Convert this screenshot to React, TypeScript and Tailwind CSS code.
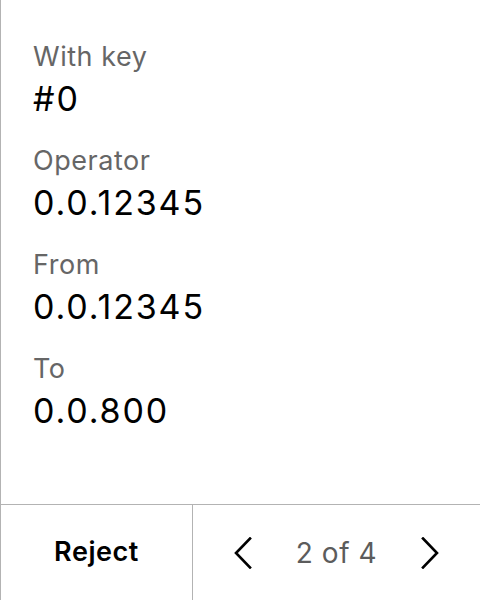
const rows = [
  { label: "With key", value: "#0" },
  { label: "Operator", value: "0.0.12345" },
  { label: "From", value: "0.0.12345" },
  { label: "To", value: "0.0.800" },
];

function Chevron({ dir }: { dir: "left" | "right" }) {
  return (
    <svg width="18" height="32" viewBox="0 0 18 32" fill="none" aria-hidden="true">
      <polyline
        points={dir === "left" ? "16,1.5 2,16 16,30.5" : "2,1.5 16,16 2,30.5"}
        stroke="black"
        strokeWidth="2.6"
        strokeLinecap="square"
        strokeLinejoin="miter"
      />
    </svg>
  );
}

export default function App() {
  return (
    <div className="flex h-[600px] w-[480px] flex-col border-l border-[#b3b3b3] bg-white font-['Inter',sans-serif]">
      <div className="flex flex-1 flex-col px-8 pt-[38px]">
        {rows.map((row) => (
          <div key={row.label} className="mb-[20px]">
            <div className="text-[27px] leading-[38px] tracking-[0.02em] text-[#666666]">{row.label}</div>
            <div className="text-[34px] leading-[46px] tracking-[0.055em] text-black">{row.value}</div>
          </div>
        ))}
      </div>
      <div className="flex h-[96px] border-t border-[#b3b3b3]">
        <button
          type="button"
          className="flex w-[192px] items-center justify-center border-r border-[#b3b3b3] text-[27px] font-semibold tracking-[0.02em] text-black"
        >
          Reject
        </button>
        <div className="flex flex-1 items-center justify-center gap-[44px]">
          <Chevron dir="left" />
          <span className="text-[28px] tracking-[0.02em] text-[#5c5c5c]">2 of 4</span>
          <Chevron dir="right" />
        </div>
      </div>
    </div>
  );
}
